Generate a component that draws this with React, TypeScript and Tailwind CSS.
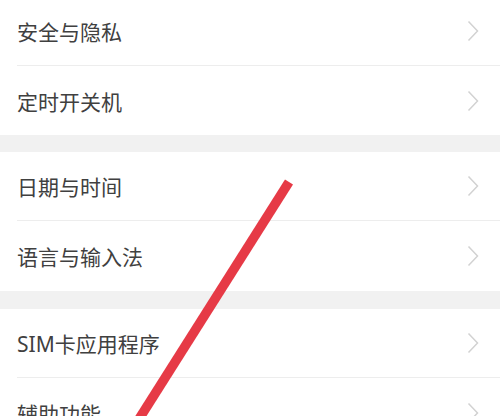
import React from "react";

function Chevron() {
  return (
    <svg width="12" height="22" viewBox="0 0 12 22" className="shrink-0">
      <polyline points="1.5,1.5 10.5,11 1.5,20.5" fill="none" stroke="#d2d2d2" strokeWidth="1.5" />
    </svg>
  );
}

function Row({ label, last }: { label: string; last?: boolean }) {
  return (
    <div className="bg-white pl-[17px]">
      <div className={`flex h-[69px] items-center pr-[21px] ${last ? "" : "border-b border-[#ededed]"}`}>
        <span className="flex-1 text-[21px] leading-none text-[#404040] pt-[3px]">{label}</span>
        <Chevron />
      </div>
    </div>
  );
}

function Section({ labels }: { labels: string[] }) {
  return (
    <div className="flex flex-col">
      {labels.map((l, i) => (
        <Row key={l} label={l} last={i === labels.length - 1} />
      ))}
    </div>
  );
}

export default function App() {
  return (
    <div
      className="relative h-[416px] w-[500px] overflow-hidden bg-white"
      style={{ fontFamily: '"Noto Sans", "Noto Sans CJK SC", sans-serif' }}
    >
      <div className="-mt-[3px] flex flex-col">
        <Section labels={["安全与隐私", "定时开关机"]} />
        <div className="h-[17px] bg-[#f1f1f1]" />
        <Section labels={["日期与时间", "语言与输入法"]} />
        <div className="mt-[1px] h-[18px] bg-[#f1f1f1]" />
        <Section labels={["SIM卡应用程序", "辅助功能"]} />
      </div>
      <svg className="pointer-events-none absolute left-0 top-0" width="500" height="416" viewBox="0 0 500 416">
        <line x1="289" y1="182" x2="127" y2="438" stroke="#e63a46" strokeWidth="9.5" />
      </svg>
    </div>
  );
}
